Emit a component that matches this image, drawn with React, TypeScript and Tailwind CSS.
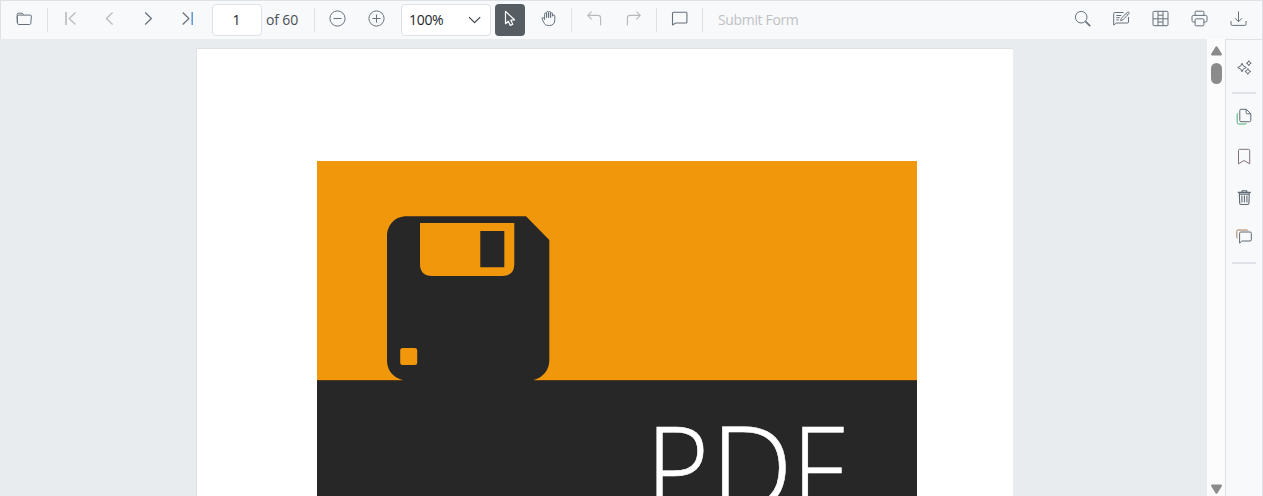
import type { ReactNode } from "react";

function Icon({ children, className = "text-[#6c757d]" }: { children: ReactNode; className?: string }) {
  return (
    <svg width="17" height="17" viewBox="0 0 17 17" fill="none" stroke="currentColor" strokeWidth="1" strokeLinejoin="round" className={className}>
      {children}
    </svg>
  );
}

function ToolButton({ label, disabled = false, children }: { label: string; disabled?: boolean; children: ReactNode }) {
  return (
    <button aria-label={label} disabled={disabled} className="flex h-8 w-[39px] shrink-0 items-center justify-center pb-[3px]">
      <Icon className={disabled ? "text-[#b6babd]" : "text-[#66717c]"}>{children}</Icon>
    </button>
  );
}

function Separator() {
  return <div className="mx-[3px] h-6 w-px shrink-0 bg-[#dee2e6]" />;
}

function SideButton({ label, children, className }: { label: string; children: ReactNode; className: string }) {
  return (
    <button aria-label={label} className={`flex h-[17px] w-[17px] shrink-0 ${className}`}>
      <Icon className="text-[#5f6973]">{children}</Icon>
    </button>
  );
}

function Toolbar() {
  return (
    <header className="flex h-[39px] shrink-0 items-center border border-b-0 border-[#dee2e6] bg-[#f8f9fa] px-1 text-[14px] text-[#495057]">
      <ToolButton label="Open file">
        <path d="M1.2 12.8V4.2q0-1 1-1h4l1.6 1.900h6.600q1 0 1 1l-.6 7.200q-.1 1.200-1.200 1.200H3q-1.300 0-1.400-1.200L1.200 6.600q0-1.400 1.400-1.500h5.200" />
      </ToolButton>
      <Separator />
      <ToolButton label="First page" disabled>
        <path d="M4 2v13" strokeWidth="1.600" />
        <path d="M13.500 2.500l-6.300 6 6.300 6" strokeWidth="1.200" />
      </ToolButton>
      <ToolButton label="Previous page" disabled>
        <path d="M11.600 2.500l-6.200 6 6.200 6" strokeWidth="1.200" />
      </ToolButton>
      <ToolButton label="Next page">
        <path d="M5.200 2.500l6.200 6-6.200 6" strokeWidth="1.200" />
      </ToolButton>
      <ToolButton label="Last page">
        <path d="M3.700 2.500l6.200 6-6.200 6" strokeWidth="1.200" />
        <path d="M13.200 2v13" stroke="#5290d0" strokeWidth="1.400" />
      </ToolButton>
      <div className="ml-[5px] flex h-8 w-[50px] shrink-0 items-center justify-center rounded border border-[#dee2e6] bg-white pr-px pb-px text-[#212529]">1</div>
      <span className="ml-1 w-[45px] shrink-0 pb-px tracking-[-0.15px] whitespace-nowrap">of 60</span>
      <Separator />
      <ToolButton label="Zoom out">
        <circle cx="8.500" cy="8.500" r="7.600" />
        <path d="M4.500 8.500h8" />
      </ToolButton>
      <ToolButton label="Zoom in">
        <circle cx="8.500" cy="8.500" r="7.600" />
        <path d="M4.500 8.500h8M8.500 4.500v8" />
      </ToolButton>
      <div className="ml-[5px] flex h-8 w-[90px] shrink-0 items-center justify-between rounded border border-[#dee2e6] bg-white pr-[7px] pb-px pl-[7px] tracking-[-0.3px] text-[#212529]">
        100%
        <Icon className="text-[#343a40]">
          <path d="M3 6.100l5.600 5.500 5.600-5.500" strokeWidth="1.100" />
        </Icon>
      </div>
      <button aria-label="Selection tool" className="mr-1 ml-1 flex h-8 w-[30px] shrink-0 items-center justify-center rounded bg-[#565e64] pb-[3px]">
        <Icon className="text-white">
          <path d="M3.500 1.400v12.300l2.800-2.500 2 4.200 2.500-1.200-2-4 3.700-.4z" strokeWidth="1.200" />
        </Icon>
      </button>
      <ToolButton label="Pan tool">
        <path d="M4.600 9.600V4.200q0-1.200 1-1.200t1 1.200v3.400-5q0-1.100 1-1.100t1 1.100v5-5q0-1.100 1-1.100t1 1.100v5.200-3.900q0-1.100 1-1.100t1 1.100v2.300q0-1.100 1.200-1.100 1 0 1 1.100v3.400c0 3.600-1.600 5.900-5.400 5.900H8.200c-2.700 0-3.700-1.600-4.700-3.600L2.100 8.800q-.4-1.200.7-1.300.8 0 1.300 1z" />
      </ToolButton>
      <Separator />
      <ToolButton label="Undo" disabled>
        <path d="M5.600 1.700L1.700 5.400l3.900 3.900M1.900 5.400h10q2.700 0 2.700 2.700v7.200" strokeWidth="1.150" />
      </ToolButton>
      <ToolButton label="Redo" disabled>
        <path d="M11.400 1.700l3.900 3.700-3.900 3.900M15 5.400H5q-2.600 0-2.600 2.700v7.200" strokeWidth="1.150" />
      </ToolButton>
      <Separator />
      <ToolButton label="Add comment">
        <path d="M1.500 15V3.500q0-1.200 1.200-1.200h12.200q1 0 1 1.200v8.400q0 1.100-1.100 1.100H5.200q-1 0-1.700.7z" strokeWidth="1.100" />
      </ToolButton>
      <Separator />
      <button disabled className="ml-3 pb-px tracking-[-0.35px] whitespace-nowrap text-[#bfc2c5]">Submit Form</button>
      <div className="ml-auto flex">
        <ToolButton label="Search">
          <circle cx="7.200" cy="7.200" r="5.800" />
          <path d="M11.400 11.400l4.800 4.700" strokeWidth="1.600" />
        </ToolButton>
        <ToolButton label="Annotations">
          <path d="M10.500 2.500H1.700q-1 0-1 1V15l2.700-2h11q1.100 0 1.100-1V7M3.300 5.500h5M3.300 7.700h3.400M3.300 9.900h2.500" />
          <path d="M7.600 10.700l.7-2.400 6.100-6.100q.8-.6 1.500.1t0 1.400L9.800 9.900zM13.200 3.400l1.500 1.500" />
        </ToolButton>
        <ToolButton label="Form designer">
          <path d="M2 1.300h13q1 0 1 1v12.400q0 1-1 1H2q-1 0-1-1V2.300q0-1 1-1zM6 1.300v14.400M11 1.300v14.400M6 5.200h5M1 8.800h15M6 12h5" />
        </ToolButton>
        <ToolButton label="Print">
          <path d="M4.100 5.300V2.200q0-1 1-1h6.800q1 0 1 1v3.100M4.100 12H2.300q-1.300 0-1.300-1.300V6.800q0-1.400 1.400-1.400h12.200Q16 5.400 16 6.800v3.900q0 1.300-1.300 1.300h-1.800" />
          <rect x="4.100" y="8.800" width="8.800" height="7" rx="1" />
        </ToolButton>
        <ToolButton label="Download">
          <path d="M8.500 1.500v10M5 8.200l3.500 3.500L12 8.200M1 11v3.200q0 1.200 1.200 1.200h12.600q1.200 0 1.200-1.200V11" />
        </ToolButton>
      </div>
    </header>
  );
}

function Cover() {
  return (
    <div className="flex h-[680px] w-[600px] flex-col bg-[#272727]">
      <div className="h-[219px] shrink-0 border-b border-[#533817] bg-[#f0970c] pl-[69px] box-content">
        <svg width="165" height="220" viewBox="0 0 165 220" className="block">
          <path fill="#272727" d="M20.500 55.300H140L163.300 79v120.500c0 9-6 17-15.500 19.500v1H16.500v-1C7 216.500 1 209 1 199.500V75.500C1 64 9 55.300 20.500 55.300Z" />
          <path fill="#f0970c" d="M34 62h94.300v41q0 12-12 12H46q-12 0-12-12Z" />
          <path fill="#272727" d="M94.300 70h24v36.300h-24Z" />
          <rect fill="#f0970c" x="14.200" y="187" width="17" height="17" rx="2.500" />
        </svg>
      </div>
      <div className="pt-[5px] pl-[328px] text-white">
        <h1 className="flex font-['Open_Sans'] text-[116px] leading-[158px] font-light [-webkit-text-stroke:0.6px_white]">
          <span className="mr-[-3px] ml-px origin-left scale-x-[.93]">P</span>
          <span className="-mr-px">D</span>
          <span className="origin-left scale-x-[.9]">F</span>
        </h1>
      </div>
    </div>
  );
}

function Scrollbar() {
  return (
    <div className="flex w-[18px] shrink-0 flex-col items-center bg-[#fcfcfc] pt-[7px] pb-[2px] pl-px">
      <svg width="13" height="10" viewBox="0 0 14 10" preserveAspectRatio="none" fill="#8b8b8b">
        <path d="M6 .8q1-1 2 0l4.500 6.700q1 2-.8 2H2.300q-1.800 0-.8-2z" />
      </svg>
      <div className="mt-[7px] h-[21px] w-[11px] rounded-full bg-[#8b8b8b]" />
      <svg width="13" height="10" viewBox="0 0 14 10" preserveAspectRatio="none" fill="#8b8b8b" className="mt-auto">
        <path d="M6 9.200q1 1 2 0l4.500-6.700q1-2-.8-2H2.300q-1.800 0-.8 2z" />
      </svg>
    </div>
  );
}

function Sidebar() {
  return (
    <aside className="flex w-[38px] shrink-0 flex-col items-center border border-b-0 border-[#dee2e6] bg-[#f8f9fa]">
      <SideButton label="AI assistant" className="mt-[19px]">
        <path d="M6 4.200q.6 3.500 4.300 4.300Q6.600 9.300 6 12.800 5.400 9.300 1.700 8.500 5.400 7.700 6 4.200zM12.800 1.700q.3 2 2.400 2.500-2.100.5-2.400 2.500-.4-2-2.400-2.500 2-.5 2.400-2.500zM11.800 9.600q.4 2.300 2.900 2.900-2.500.6-2.900 2.900-.4-2.300-2.900-2.900 2.500-.6 2.900-2.900z" />
      </SideButton>
      <div className="mt-[16px] h-[2px] w-6 shrink-0 bg-[#dee2e6]" />
      <SideButton label="Page thumbnails" className="mt-[14px]">
        <path d="M2.200 5.500q-1 0-1 1v8q0 1.500 1.500 1.500h6.500q1 0 1-1" stroke="#4fac79" />
        <path d="M4.700 1.300h5.600l4.500 4.500v6.700q0 1.200-1.200 1.200H5q-1.200 0-1.200-1.200V2.500q0-1.200.9-1.200zM10.100 1.300v3.200q0 1.300 1.300 1.300h3.400" />
      </SideButton>
      <SideButton label="Bookmarks" className="mt-[23px]">
        <path d="M2.500 15.800V2.400q0-1.100 1.100-1.100h9q1.100 0 1.100 1.100v13.400l-5.600-3.300z" stroke="#80717c" />
      </SideButton>
      <SideButton label="Delete page" className="mt-[24px]">
        <path d="M1.800 3.400h13M6 3V1.700h4.800V3M3.300 3.400l.4 10.800q.1 1.300 1.400 1.300h6.400q1.300 0 1.400-1.300l.4-10.800M3.500 5.100h9.600M5.900 6.500v7M8.400 6.500v7M10.900 6.500v7" strokeWidth="1.100" />
      </SideButton>
      <SideButton label="Comments" className="mt-[22px]">
        <path d="M1.400 10.200q-.6-.3-.6-1.200V3.300q0-1.300 1.300-1.300h8.700q1.200 0 1.200.8" stroke="#a97b5b" />
        <path d="M3.600 15.100V5.200q0-1.200 1.200-1.200h9.300q1.200 0 1.200 1.200v6.600q0 1.200-1.200 1.200H6.600q-1 0-1.600.8z" />
      </SideButton>
      <div className="mt-[17px] h-[2px] w-6 shrink-0 bg-[#dee2e6]" />
    </aside>
  );
}

export default function App() {
  return (
    <div className="flex h-[496px] w-[1263px] flex-col overflow-hidden bg-[#e8ecef] font-['Open_Sans',sans-serif]">
      <Toolbar />
      <main className="flex min-h-0 flex-1">
        <div className="min-w-0 flex-1 overflow-hidden pt-[9px] pl-[196px]">
          <div className="h-[1056px] w-[817px] border-t border-l border-[#dee2e6] bg-white pt-[112px] pl-[120px]">
            <Cover />
          </div>
        </div>
        <Scrollbar />
        <Sidebar />
      </main>
    </div>
  );
}
